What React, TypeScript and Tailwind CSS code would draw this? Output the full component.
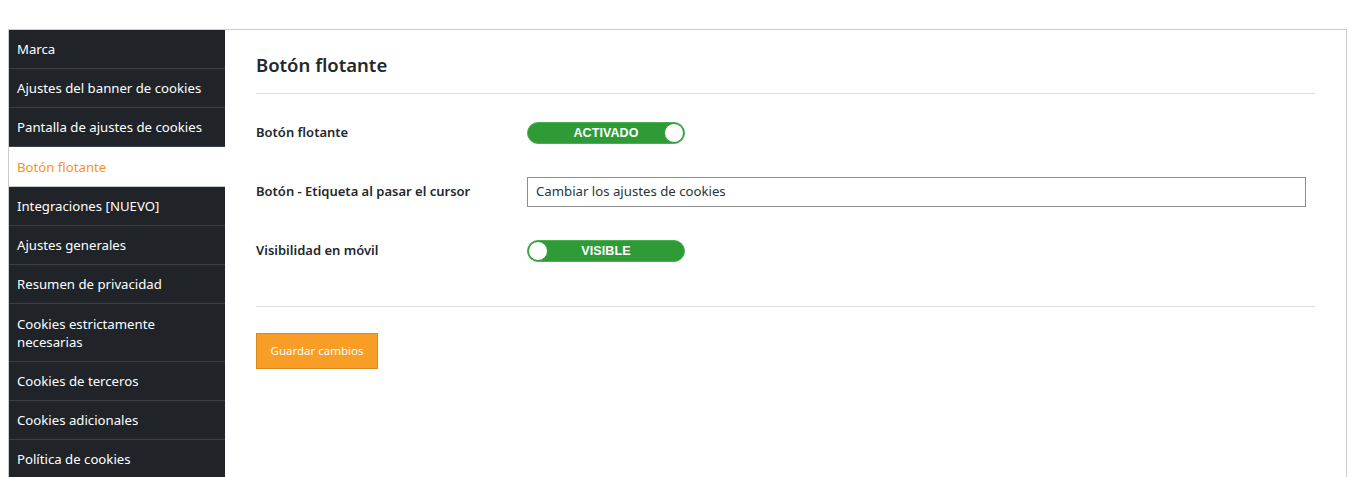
import React from "react";

const items = [
  "Marca",
  "Ajustes del banner de cookies",
  "Pantalla de ajustes de cookies",
  "Botón flotante",
  "Integraciones [NUEVO]",
  "Ajustes generales",
  "Resumen de privacidad",
  "Cookies estrictamente necesarias",
  "Cookies de terceros",
  "Cookies adicionales",
  "Política de cookies",
];

function Toggle({ label, on }: { label: string; on: boolean }) {
  return (
    <div className="relative w-[158px] h-[22px] rounded-full bg-[#2e9b37] border border-[#4caf50] flex items-center justify-center">
      <span
        className="text-white font-bold text-[12.5px] leading-none tracking-[0.1px]"
        style={{ fontFamily: '"Liberation Sans", Arial, sans-serif' }}
      >
        {label}
      </span>
      <span
        className={
          "absolute top-[0px] w-[20px] h-[20px] rounded-full bg-white border border-[#2e9b37] " +
          (on ? "right-[0px]" : "left-[0px]")
        }
      />
    </div>
  );
}

export default function App() {
  return (
    <div
      className="w-[1363px] h-[477px] bg-white overflow-hidden pt-[29px] pl-[8px]"
      style={{ fontFamily: '"Noto Sans", "Open Sans", sans-serif' }}
    >
      <div className="w-[1339px] h-[460px] border border-[#cccccc] border-b-0 flex">
        <div className="w-[216px] shrink-0 bg-[#202428] flex flex-col">
          {items.map((it) => {
            const active = it === "Botón flotante";
            const two = it === "Cookies estrictamente necesarias";
            return (
              <div
                key={it}
                className={
                  "shrink-0 px-[8px] flex flex-col justify-center text-[13.2px] leading-[18px] border-b " +
                  (two ? "h-[58px] " : active ? "h-[40px] " : "h-[39px] ") +
                  (active
                    ? "bg-white text-[#f7931e] border-[#cccccc]"
                    : "text-white border-[#3a3f44]")
                }
              >
                {two ? (
                  <>
                    <span>Cookies estrictamente</span>
                    <span>necesarias</span>
                  </>
                ) : (
                  <span>{it}</span>
                )}
              </div>
            );
          })}
        </div>
        <div className="flex-1 pl-[31px] pr-[31px] pt-[21px]">
          <h2 className="text-[18.5px] leading-[28px] font-semibold text-[#23282d]">Botón flotante</h2>
          <div className="mt-[14px] h-px bg-[#dcdcdc]" />
          <div className="pt-[24px] flex flex-col gap-[29px]">
            <div className="flex items-center h-[30px]">
              <div className="w-[271px] text-[13px] font-semibold text-[#23282d]">Botón flotante</div>
              <Toggle label="ACTIVADO" on={true} />
            </div>
            <div className="flex items-center h-[30px]">
              <div className="w-[271px] text-[13px] font-semibold text-[#23282d]">
                Botón - Etiqueta al pasar el cursor
              </div>
              <div className="w-[779px] h-[30px] border border-[#8c8c8c] flex items-center px-[8px] text-[13.2px] text-[#2c3338]">
                Cambiar los ajustes de cookies
              </div>
            </div>
            <div className="flex items-center h-[30px]">
              <div className="w-[271px] text-[13px] font-semibold text-[#23282d]">Visibilidad en móvil</div>
              <Toggle label="VISIBLE" on={false} />
            </div>
          </div>
          <div className="mt-[40px] h-px bg-[#dcdcdc]" />
          <button className="mt-[26px] h-[36px] w-[122px] bg-[#f89d26] border border-[#d88a1e] text-white text-[11.5px]">
            Guardar cambios
          </button>
        </div>
      </div>
    </div>
  );
}
